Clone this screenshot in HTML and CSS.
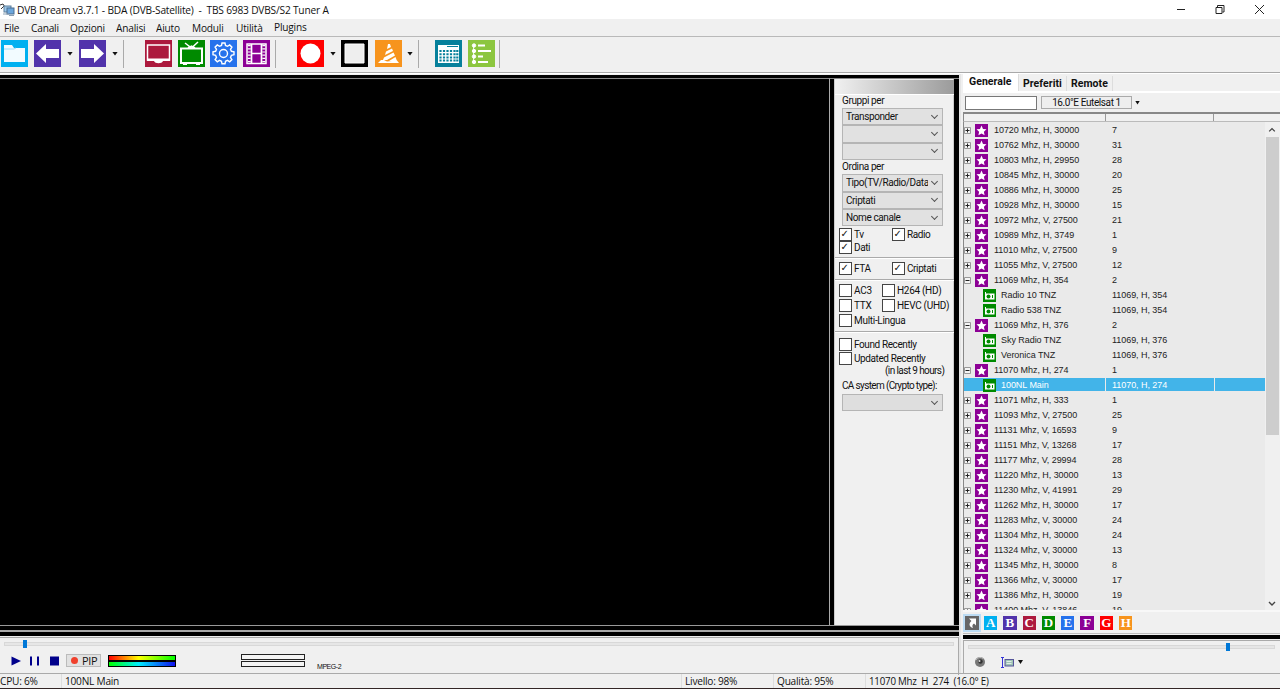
FILE: index.html
```
<!DOCTYPE html>
<html lang="it">
<head>
    <meta charset="UTF-8">
    <title>DVB Dream v3.7.1</title>
    <link rel="stylesheet" href="styles.css">
</head>
<body>
    <!-- Title bar -->
    <div class="titlebar">
        <svg class="app-icon" width="15" height="14" viewBox="0 0 15 14">
            <path d="M0 2l3-1 2 3M1 6l3-3" stroke="#333" fill="none"/>
            <rect x="4" y="3" width="7" height="6" fill="#9cc8e8" stroke="#5e7f9c"/>
            <rect x="7" y="5" width="7" height="6" fill="#6ba6dc" stroke="#4b6d90"/>
            <path d="M3 11h6M9 12.500h5" stroke="#8aa0b4"/>
        </svg>
        <span class="title">DVB Dream v3.7.1 - BDA (DVB-Satellite)&nbsp; -&nbsp; TBS 6983 DVBS/S2 Tuner A</span>
        <svg class="window-buttons" width="90" height="12" viewBox="0 0 90 12" fill="none" stroke="#222">
            <path d="M2 5.500h8"/>
            <path d="M41 3.500h6v6h-6zM42.500 3V1.500h6.500v6.500h-1.500"/>
            <path d="M80 1l9 9M89 1l-9 9"/>
        </svg>
    </div>

    <!-- Menu -->
    <div class="menu">
        <span>File</span><span>Canali</span><span>Opzioni</span><span>Analisi</span><span>Aiuto</span><span>Moduli</span><span>Utilità</span><span class="plugins">Plugins</span>
    </div>

    <!-- Toolbar -->
    <div class="toolbar">
        <svg class="tool folder" viewBox="0 0 27 27"><path d="M3 5h8l2 3h11v14H3z" fill="#f2fbff"/><path d="M3 9h10l2-1" stroke="#9bdcf8" fill="none"/></svg>
        <svg class="tool nav" viewBox="0 0 27 27"><path d="M2 13.500L12 4v5h13v9H12v5z" fill="#fff"/></svg>
        <i class="caret"></i>
        <svg class="tool nav" viewBox="0 0 27 27"><path d="M25 13.500L15 4v5H2v9h13v5z" fill="#fff"/></svg>
        <i class="caret"></i>
        <i class="sep sep-wide"></i>
        <svg class="tool monitor" viewBox="0 0 27 27"><path d="M2.500 5h22v15h-22z" fill="none" stroke="#fff" stroke-width="1.500"/><path d="M2 18.500h23v2.500h-7c-1 3-8 3-9 0H2z" fill="#fff"/></svg>
        <svg class="tool tv" viewBox="0 0 27 27"><path d="M7 3l6.500 5L20 2M10 8l3.500-2L17 8" fill="none" stroke="#fff" stroke-width="1.500"/><path d="M3 8.500h21v14.500H3z" fill="none" stroke="#fff" stroke-width="2"/><path d="M5 24h4M18 24h4" stroke="#fff" stroke-width="2"/></svg>
        <svg class="tool gear" viewBox="0 0 27 27" fill="none" stroke="#fff" stroke-width="1.400"><path d="M11.500 5.500l.5-2.500h3l.5 2.500 2 .8L19.700 5l2.200 2.200-1.400 2.100.9 2 2.600.5v3l-2.600.6-.9 2 1.400 2.200-2.200 2.200-2.200-1.400-2 .9-.5 2.500h-3l-.5-2.500-2-.9-2.200 1.400-2.200-2.200 1.400-2.200-.9-2-2.600-.6v-3l2.600-.5.9-2-1.400-2.100L7.300 5l2.200 1.300z"/><circle cx="13.500" cy="13.500" r="4"/></svg>
        <svg class="tool film" viewBox="0 0 27 27" fill="none" stroke="#fff"><path d="M4 4h19v19.500H4z" stroke-width="1.500"/><path d="M8.500 4v19M18.500 4v19M8 13.500h11" stroke-width="1.700"/><path d="M6.200 5v18M20.800 5v18" stroke-width="3" stroke-dasharray="1.200 2"/></svg>
        <i class="sep sep-rec"></i>
        <svg class="tool rec" viewBox="0 0 27 27"><circle cx="13.500" cy="13.500" r="10" fill="#fff"/></svg>
        <i class="caret"></i>
        <svg class="tool stop" viewBox="0 0 27 27"><path d="M4 4h19v19H4z" fill="#eee" stroke="#fff"/></svg>
        <svg class="tool cone" viewBox="0 0 27 27" fill="#fff"><path d="M13 4h2l1 3-4 2zM11 11.500l6-3 1 2.500-8 4zM9 17.500l9.500-5 1.500 3-8 4.500H8zM14 21l6.500-4 1.500 4z"/><path d="M3 23l3-3h3l3 1.500 10-1 2 2.500z"/></svg>
        <i class="caret"></i>
        <i class="sep sep-epg"></i>
        <svg class="tool epg" viewBox="0 0 27 27"><path d="M3 5h21v18H3z" fill="#fff"/><path d="M5.500 10v12M9 10v12M12.500 10v12M16 10v12M19.500 10v12M22.300 10v12" stroke="#06809b" stroke-width="2.200" stroke-dasharray="2 1.200"/><path d="M12 6.500h11" stroke="#06809b"/></svg>
        <svg class="tool list" viewBox="0 0 27 27" fill="#fff" stroke="#fff"><circle cx="6" cy="5.500" r="1.700"/><circle cx="6" cy="11" r="1.700"/><circle cx="6" cy="16.500" r="1.700"/><circle cx="6" cy="22" r="1.700"/><path d="M5.500 5v17" stroke-width=".8"/><path d="M10 5.500h7M10 11h13M10 16.500h5M10 22h10" stroke-width="2"/></svg>
        <i class="sep sep-end"></i>
    </div>

    <div class="workspace">
        <div class="left">
            <div class="stage">
                <div class="video"></div>
                <div class="filters">
                    <div class="grip"></div>
                    <div class="group group-sort">
                        <div class="label">Gruppi per</div>
                        <div class="select"><span>Transponder</span><i></i></div>
                        <div class="select"><span></span><i></i></div>
                        <div class="select"><span></span><i></i></div>
                        <div class="label">Ordina per</div>
                        <div class="select"><span>Tipo(TV/Radio/Data)</span><i></i></div>
                        <div class="select"><span>Criptati</span><i></i></div>
                        <div class="select"><span>Nome canale</span><i></i></div>
                        <div class="checks types">
                            <label class="check on">Tv</label><label class="check on">Radio</label>
                            <label class="check on">Dati</label>
                        </div>
                    </div>
                    <div class="group group-crypt">
                        <div class="checks crypt">
                            <label class="check on">FTA</label><label class="check on">Criptati</label>
                        </div>
                    </div>
                    <div class="group group-codec">
                        <div class="checks codec">
                            <label class="check">AC3</label><label class="check">H264 (HD)</label>
                            <label class="check">TTX</label><label class="check">HEVC (UHD)</label>
                            <label class="check multi">Multi-Lingua</label>
                        </div>
                    </div>
                    <div class="group group-recent">
                        <div class="checks recent">
                            <label class="check">Found Recently</label>
                            <label class="check">Updated Recently</label>
                        </div>
                        <div class="hours">(in last 9 hours)</div>
                        <div class="label">CA system (Crypto type):</div>
                        <div class="select"><span></span><i></i></div>
                    </div>
                </div>
            </div>
            <div class="splitter"></div>
            <div class="player">
                <div class="track"><i class="thumb thumb-seek"></i></div>
                <div class="controls">
                    <svg class="transport" width="60" height="12" viewBox="0 0 60 12" fill="#00008b">
                        <path d="M1.500 1.500l9.500 4.500-9.500 4.500z"/><path d="M20 1.500h2v9h-2zM27 1.500h2v9h-2z"/><path d="M40 1.500h9v9h-9z"/>
                    </svg>
                    <div class="pip"><i></i><span>PIP</span></div>
                    <div class="meters"><i class="level"></i><i class="quality"></i></div>
                    <div class="audio"><i></i><i></i></div>
                    <div class="codec-name">MPEG-2</div>
                </div>
            </div>
        </div>

        <div class="right">
            <div class="tabs"><span class="tab active">Generale</span><span class="tab">Preferiti</span><span class="tab">Remote</span></div>
            <div class="search">
                <div class="search-box"></div>
                <div class="satellite">16.0°E Eutelsat 1</div>
                <i class="caret"></i>
            </div>
            <div class="list-head"><i></i><i></i><i></i></div>
            <div class="list-body">
                <div class="rows" id="rows"></div>
                <div class="scrollbar">
                    <svg width="14" height="15" viewBox="0 0 14 16"><path d="M4 10l3-3 3 3" fill="none" stroke="#444" stroke-width="1.400"/></svg>
                    <div class="scroll-thumb"></div>
                    <svg class="down" width="14" height="16" viewBox="0 0 14 16"><path d="M4 8l3 3 3-3" fill="none" stroke="#444" stroke-width="1.400"/></svg>
                </div>
            </div>
            <div class="letters">
                <span class="letter-link"><svg width="14" height="14" viewBox="0 0 14 14"><path d="M4 2.500h7V9.500L9 7.600C7 9 7 10.500 8 12 4 11 3.500 7.500 6.400 5z" fill="#fff"/></svg></span>
                <span class="letter a">A</span><span class="letter b">B</span><span class="letter c">C</span><span class="letter d">D</span><span class="letter e">E</span><span class="letter f">F</span><span class="letter g">G</span><span class="letter h">H</span>
            </div>
            <div class="divider"></div>
            <div class="volume">
                <div class="track"><i class="thumb thumb-volume"></i></div>
                <div class="volume-buttons">
                    <svg width="12" height="12" viewBox="0 0 12 12"><circle cx="6" cy="6" r="5" fill="#777"/><path d="M2 4a4.500 4.500 0 0 1 7-1.500" stroke="#bbb" fill="none"/><circle cx="6.500" cy="5.500" r="2.200" fill="#333"/><circle cx="5.500" cy="5" r="1" fill="#ddd"/></svg>
                    <svg class="aspect" width="14" height="13" viewBox="0 0 14 13"><path d="M1.500 1v11M0 1.500h3M0 11.500h3" stroke="#3434d8"/><rect x="4" y="3.500" width="8.500" height="6.500" fill="#9fc3b4" stroke="#55559a"/><path d="M5.500 5.500h5M5.500 7.500h5" stroke="#e2eee8"/></svg>
                    <i class="caret"></i>
                </div>
            </div>
        </div>
    </div>

    <div class="statusbar">
        <div><span>CPU: 6%</span></div><div><span>100NL Main</span></div><div><span>Livello: 98%</span></div><div><span>Qualità: 95%</span></div><div><span>11070 Mhz&nbsp; H&nbsp; 274&nbsp; (16.0° E)</span></div>
    </div>

    <script>
        // type: + closed, - open, c channel, s selected channel
        const channels = [
            ['+', '10720 Mhz, H, 30000', '7'],
            ['+', '10762 Mhz, H, 30000', '31'],
            ['+', '10803 Mhz, H, 29950', '28'],
            ['+', '10845 Mhz, H, 30000', '20'],
            ['+', '10886 Mhz, H, 30000', '25'],
            ['+', '10928 Mhz, H, 30000', '15'],
            ['+', '10972 Mhz, V, 27500', '21'],
            ['+', '10989 Mhz, H, 3749', '1'],
            ['+', '11010 Mhz, V, 27500', '9'],
            ['+', '11055 Mhz, V, 27500', '12'],
            ['-', '11069 Mhz, H, 354', '2'],
            ['c', 'Radio 10 TNZ', '11069, H, 354'],
            ['c', 'Radio 538 TNZ', '11069, H, 354'],
            ['-', '11069 Mhz, H, 376', '2'],
            ['c', 'Sky Radio TNZ', '11069, H, 376'],
            ['c', 'Veronica TNZ', '11069, H, 376'],
            ['-', '11070 Mhz, H, 274', '1'],
            ['s', '100NL Main', '11070, H, 274'],
            ['+', '11071 Mhz, H, 333', '1'],
            ['+', '11093 Mhz, V, 27500', '25'],
            ['+', '11131 Mhz, V, 16593', '9'],
            ['+', '11151 Mhz, V, 13268', '17'],
            ['+', '11177 Mhz, V, 29994', '28'],
            ['+', '11220 Mhz, H, 30000', '13'],
            ['+', '11230 Mhz, V, 41991', '29'],
            ['+', '11262 Mhz, H, 30000', '17'],
            ['+', '11283 Mhz, V, 30000', '24'],
            ['+', '11304 Mhz, H, 30000', '24'],
            ['+', '11324 Mhz, V, 30000', '13'],
            ['+', '11345 Mhz, H, 30000', '8'],
            ['+', '11366 Mhz, V, 30000', '17'],
            ['+', '11386 Mhz, H, 30000', '19'],
            ['+', '11400 Mhz, V, 13846', '19']
        ];

        const star = '<svg class="row-icon star" viewBox="0 0 13 13"><path d="M6.500 1.500l1.500 3.400 3.500.4-2.600 2.400.7 3.600-3.100-1.900-3.100 1.900.7-3.600-2.600-2.400 3.500-.4z" fill="#fff"/></svg>';
        const radio = '<svg class="row-icon radio" viewBox="0 0 13 13"><path d="M2 4.500V3h1v1.500h8.500v6H2z" fill="#fff"/><circle cx="5.500" cy="7.500" r="2" fill="#008a00"/><path d="M9.500 6v3" stroke="#008a00"/></svg>';

        document.getElementById('rows').innerHTML = channels.map(([type, name, info]) => {
            const child = type === 'c' || type === 's';
            const box = child ? '' : `<svg class="expander" viewBox="0 0 7 7"><path d="M.5.5h6v6h-6z" fill="#f4f4f4" stroke="#999"/><path d="M1.500 3.500h4${type === '+' ? 'M3.500 1.500v4' : ''}" stroke="#222"/></svg>`;
            return `<div class="row${child ? ' child' : ''}${type === 's' ? ' selected' : ''}">
                <div class="cell name">${box}${child ? radio : star}<span>${name}</span></div>
                <div class="cell info">${info}</div><div class="cell"></div>
            </div>`;
        }).join('');
    </script>
</body>
</html>
```
FILE: styles.css
```
* {
    box-sizing: border-box;
}

body {
    margin: 0;
    width: 1280px;
    height: 689px;
    overflow: hidden;
    display: flex;
    flex-direction: column;
    background: #f0f0f0;
    color: #111;
    font-family: "Open Sans", sans-serif;
    font-size: 11px;
}

svg {
    display: block;
    flex: none;
}

i {
    display: block;
    flex: none;
}

/* Title and menu */
.titlebar {
    height: 19px;
    flex: none;
    display: flex;
    align-items: center;
    background: #fff;
}

.title {
    margin-left: 2px;
    font-size: 11.5px;
    letter-spacing: -0.22px;
    white-space: nowrap;
    transform: scaleX(0.885);
    transform-origin: left;
}

.window-buttons {
    margin-left: auto;
    margin-right: 15px;
}

.menu {
    height: 17px;
    flex: none;
    padding-left: 4px;
    display: grid;
    grid-template-columns: 27px 39px 46px 40px 36px 44px 38px 40px;
    line-height: 17px;
    letter-spacing: -0.2px;
}

.menu span {
    transform: scaleX(0.92);
    transform-origin: left;
}

.menu .plugins {
    line-height: 16px;
}

/* Toolbar */
.toolbar {
    height: 37px;
    flex: none;
    padding-left: 1px;
    padding-bottom: 2px;
    display: flex;
    align-items: center;
    border-top: 1px solid #b9b9b9;
    border-bottom: 1px solid #a9a9a9;
}

.tool {
    width: 27px;
    height: 27px;
    margin-right: 6px;
}

.folder { background: #00b0f0; }
.nav { background: #5133ab; margin-right: 5px; }
.monitor { background: #ac193d; }
.tv { background: #008a00; margin-right: 5px; }
.gear { background: #2672ec; }
.film { background: #8c0095; }
.rec { background: #f00; }
.stop { background: #000; margin-right: 7px; }
.cone { background: #f7941d; margin-right: 5px; }
.epg { background: #06809b; }
.list { background: #8cc63f; margin-right: 4px; }

.caret {
    width: 6px;
    height: 4px;
    background: #111;
    clip-path: polygon(0 0, 100% 0, 50% 100%);
    margin-right: 8px;
}

.nav + .caret { margin-left: 1px; margin-right: 6px; }
.rec + .caret { margin-right: 5px; }
.cone + .caret { margin-right: 5px; }

.sep {
    width: 1px;
    height: 28px;
    background: #aaa;
}

.sep-wide { margin-left: -1px; margin-right: 21px; }
.sep-rec { margin-left: -1px; margin-right: 21px; }
.sep-epg { margin-right: 16px; }

/* Main area */
.workspace {
    height: 600px;
    flex: none;
    display: flex;
    border-top: 1px solid #fff;
}

.left {
    width: 961px;
    padding-top: 1px;
    border-right: 2px solid #e4e4e4;
    display: flex;
    flex-direction: column;
}

.stage {
    height: 550px;
    flex: none;
    padding-top: 3px;
    display: flex;
    background: #000;
}

.video {
    width: 830px;
    background: #000;
    border-top: 1px solid #888;
    border-right: 1px solid #aaa;
}

.filters {
    flex: 1;
    padding-left: 4px;
    padding-right: 5px;
    border-top: 1px solid #888;
    background: linear-gradient(to right, #000 4px, #ccc 4px, #ccc 5px, #f0f0f0 5px, #f0f0f0 123px, #ccc 123px, #ccc 124px, #000 124px);
    font-family: Roboto, sans-serif;
    font-size: 10px;
    letter-spacing: -0.4px;
    white-space: nowrap;
}

.grip {
    height: 14px;
    margin: 1px 0 0 2px;
    background: linear-gradient(to right, #f0f0f0, #9b9b9b);
}

.group {
    margin-left: 1px;
    padding-left: 7px;
    border-bottom: 1px solid #aaa;
    box-shadow: inset 0 1px #fff;
}

.group-sort { height: 164px; }
.group-crypt { height: 22px; }
.group-codec { height: 52px; padding-top: 3px; letter-spacing: -0.3px; }
.group-recent { border: 0; padding-top: 5px; }

.label {
    height: 14px;
    line-height: 14px;
}

.select {
    width: 101px;
    height: 17.4px;
    padding: 0 4px 0 3px;
    display: flex;
    align-items: center;
    justify-content: space-between;
    background: #e1e1e1;
    border: 1px solid #b5b5b5;
}

.select span {
    width: 82px;
    overflow: hidden;
    letter-spacing: -0.4px;
}

.select i {
    width: 5px;
    height: 5px;
    margin-top: -3px;
    margin-right: 1px;
    border-right: 1px solid #555;
    border-bottom: 1px solid #555;
    transform: rotate(45deg);
}

.checks {
    display: grid;
    margin-left: -3px;
}

.types {
    grid-template-columns: 53px 1fr;
    grid-auto-rows: 13px;
    padding-top: 2px;
}

.crypt {
    grid-template-columns: 53px 1fr;
    grid-auto-rows: 20px;
}

.codec {
    grid-template-columns: 43px 1fr;
    grid-auto-rows: 15px;
}

.recent {
    grid-auto-rows: 14px;
}

.check {
    display: flex;
    align-items: center;
}

.check::before {
    content: "";
    width: 11px;
    height: 11px;
    margin-right: 2px;
    flex: none;
    border: 1px solid #444;
    background: #fff;
}

.on::before {
    content: "✓";
    font: 10px/9px "DejaVu Sans", sans-serif;
    letter-spacing: 0;
    text-indent: 0.5px;
}

.multi {
    grid-column: 1 / 3;
}

.hours {
    margin-left: 43px;
    height: 13px;
    line-height: 11px;
    letter-spacing: -0.6px;
}

.group-recent .label {
    letter-spacing: -0.65px;
    line-height: 15px;
}

.group-recent .select {
    margin-top: 2px;
    background: #dedede;
}

.splitter {
    height: 11px;
    flex: none;
    background: #000;
    border-top: 1px solid #999;
    position: relative;
}

.splitter::after {
    content: "";
    position: absolute;
    top: 4px;
    left: 0;
    right: 0;
    height: 2px;
    background: #aaa;
}

/* Player */
.player {
    flex: 1;
    margin-top: 1px;
    border-top: 1px solid #aaa;
    border-right: 1px solid #aaa;
    padding: 4px 4px 0 4px;
}

.track {
    height: 4px;
    background: #e6e6e6;
    border: 1px solid #d8d8d8;
    position: relative;
}

.thumb {
    position: absolute;
    top: -3px;
    width: 4px;
    height: 8px;
    background: #0078d7;
}

.thumb-seek { left: 18px; }

.controls {
    height: 29px;
    display: flex;
    align-items: center;
}

.transport {
    margin-left: 6px;
    margin-right: -4px;
}

.pip {
    width: 35px;
    height: 13px;
    padding-left: 4px;
    display: flex;
    align-items: center;
    background: #e1e1e1;
    border: 1px solid #bbb;
    letter-spacing: -0.3px;
}

.pip i {
    width: 7px;
    height: 7px;
    margin-right: 4px;
    border-radius: 50%;
    background: #f0402c;
}

.meters {
    margin-left: 7px;
    display: grid;
}

.meters i {
    width: 68px;
    height: 6px;
    border: 1px solid #000;
}

.level {
    background: linear-gradient(to right, #f00, #ff0 45%, #0f0);
}

.quality {
    background: linear-gradient(to right, #0f0, #0ef 45%, #11e);
}

.audio {
    margin-left: 65px;
    display: grid;
    gap: 1px;
}

.audio i {
    width: 64px;
    height: 6px;
    border: 1px solid #222;
    background: #f4f4f4;
}

.codec-name {
    margin: 11px 0 0 12px;
    font: 7px "Liberation Sans", sans-serif;
    letter-spacing: -0.45px;
}

/* Channel list */
.right {
    flex: 1;
    padding-left: 2px;
    display: flex;
    flex-direction: column;
    font-family: Roboto, sans-serif;
    font-size: 10px;
}

.right > div {
    flex: none;
}

.tabs {
    height: 19px;
    display: flex;
    align-items: flex-end;
    border-bottom: 2px solid #fff;
    font-size: 10.5px;
    font-weight: 700;
    letter-spacing: 0.05px;
}

.tab {
    height: 15px;
    padding: 0 4px;
    line-height: 15px;
    border-right: 1px solid #ddd;
}

.tab.active {
    width: 56px;
    height: 17px;
    padding: 0 6px;
    background: #fff;
}

.search {
    height: 19px;
    padding-left: 2px;
    display: flex;
    align-items: center;
}

.search-box {
    width: 72px;
    height: 14px;
    background: #fff;
    border: 1px solid #777;
}

.satellite {
    width: 91px;
    height: 13px;
    margin: 0 3px 0 4px;
    line-height: 12px;
    text-align: center;
    letter-spacing: -0.4px;
    border: 1px solid #aaa;
    background: #eee;
}

.search .caret {
    width: 5px;
}

.list-head {
    height: 10px;
    display: flex;
    border-top: 2px solid #888;
    border-left: 1px solid #888;
    border-bottom: 1px solid #bbb;
}

.list-head i {
    border-right: 1px solid #999;
}

.list-head i:nth-child(1) { width: 142px; }
.list-head i:nth-child(2) { width: 108px; }
.list-head i:nth-child(3) { width: 66px; border: 0; }

.list-body {
    height: 488px;
    overflow: hidden;
    display: flex;
    background: #eaeaea;
    border-left: 1px solid #888;
}

.rows {
    width: 301px;
    font-family: "Liberation Sans", sans-serif;
    font-size: 9px;
    letter-spacing: -0.05px;
    color: #222;
}

.row {
    height: 15.03px;
    display: grid;
    grid-template-columns: 141px 108px 1fr;
    gap: 1px;
}

.cell {
    display: flex;
    align-items: center;
}

.expander {
    width: 7px;
    height: 7px;
    margin-right: 4px;
    margin-top: 2px;
}

.row-icon {
    width: 13px;
    height: 13px;
    margin-right: 6px;
    margin-top: 1px;
}

.star { background: #8c0095; }
.radio { background: #008a00; margin-right: 5px; }
.child .name { padding-left: 19px; }
.info { padding-left: 6px; }

.selected {
    background: #eaeaea;
}

.selected .cell {
    height: 13px;
    margin-top: 1px;
    background: #42b4e9;
    color: #fff;
}

.scrollbar {
    width: 15px;
    display: flex;
    flex-direction: column;
    background: #f0f0f0;
}

.scroll-thumb {
    height: 298px;
    width: 13px;
    margin-left: 1px;
    background: #cdcdcd;
}

.down {
    margin-top: auto;
}

.letters {
    height: 24px;
    display: flex;
    align-items: center;
    border-top: 2px solid #f8f8f8;
    border-bottom: 1px solid #bbb;
}

.letter-link {
    width: 18px;
    height: 18px;
    margin-right: 3px;
    padding: 2px;
    background: #bcdcf4;
}

.letter-link svg {
    background: #666;
}

.letter {
    width: 13.3px;
    height: 14px;
    margin-right: 6px;
    color: #fff;
    font: bold 13px/14px "Liberation Serif", serif;
    text-align: center;
}

.a { background: #00b0f0; }
.b { background: #5133ab; }
.c { background: #ac193d; }
.d { background: #008a00; }
.e { background: #2672ec; }
.f { background: #8c0095; }
.g { background: #f00; }
.h { background: #f7941d; }

.divider {
    height: 4px;
    margin-top: 1px;
    background: #000;
}

.right > .volume {
    flex: 1;
    margin-top: 1px;
    padding: 4px 5px 0 4px;
    border-top: 1px solid #aaa;
    border-left: 1px solid #aaa;
}

.thumb-volume { left: 257px; }

.volume-buttons {
    height: 24px;
    margin-top: 1px;
    padding-left: 6px;
    display: flex;
    align-items: center;
}

.aspect {
    margin: 0 3px 0 15px;
}

.volume .caret {
    width: 5px;
}

/* Status bar */
.statusbar {
    height: 16px;
    flex: none;
    display: grid;
    grid-template-columns: 61px 620px 92px 92px 1fr;
    border-top: 1px solid #aaa;
    border-bottom: 1px solid #332626;
    line-height: 14px;
    letter-spacing: -0.25px;
    white-space: nowrap;
}

.statusbar div + div {
    padding-left: 3px;
    border-left: 1px solid #ddd;
}

.statusbar span {
    display: inline-block;
    transform: scaleX(0.92);
    transform-origin: left;
}

.statusbar div:last-child span {
    transform: scaleX(0.885);
}
```
